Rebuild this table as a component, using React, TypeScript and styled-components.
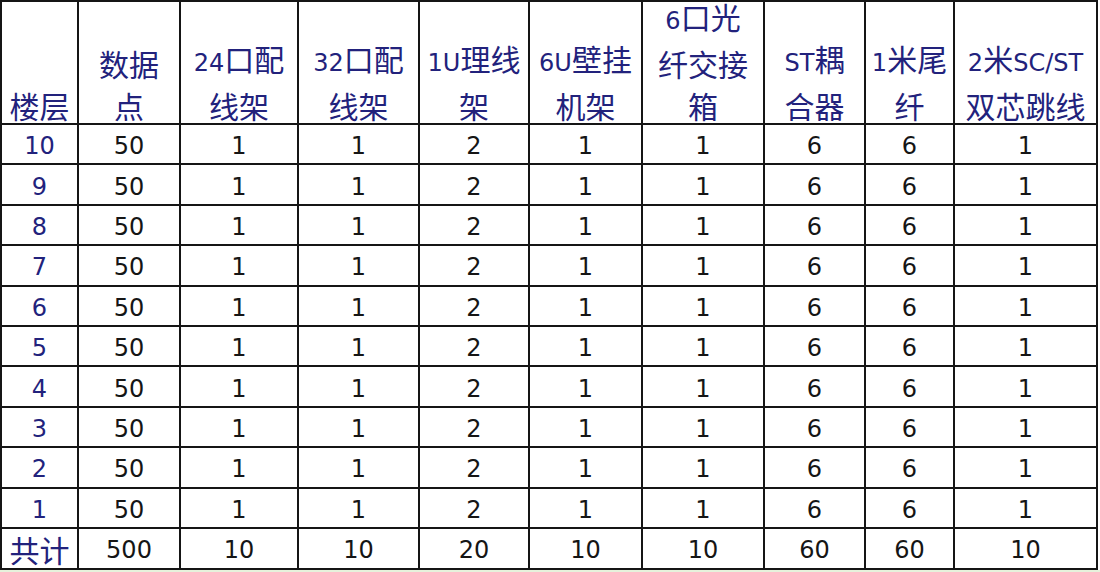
import React from "react";
import styled, { createGlobalStyle } from "styled-components";

const GlobalStyle = createGlobalStyle`
  html, body {
    margin: 0;
    padding: 0;
    background: #ffffff;
  }
  body {
    font-family: "DejaVu Sans", "Noto Sans CJK SC", sans-serif;
  }
`;

const INK = "#151515";
const NAVY = "#22227c";

const columns = [77, 102, 118, 121, 110, 113, 122, 101, 89, 143];

const headers: string[][] = [
  ["楼层"],
  ["数据", "点"],
  ["24口配", "线架"],
  ["32口配", "线架"],
  ["1U理线", "架"],
  ["6U壁挂", "机架"],
  ["6口光", "纤交接", "箱"],
  ["ST耦", "合器"],
  ["1米尾", "纤"],
  ["2米SC/ST", "双芯跳线"],
];

const perFloor = [50, 1, 1, 2, 1, 1, 6, 6, 1];
const totals = [500, 10, 10, 20, 10, 10, 60, 60, 10];
const floors = [10, 9, 8, 7, 6, 5, 4, 3, 2, 1];

const Page = styled.div`
  width: 1100px;
  height: 572px;
  overflow: hidden;
  display: flex;
  flex-direction: column;
  background: #ffffff;
`;

const Sheet = styled.table`
  width: 1097px;
  table-layout: fixed;
  border-collapse: collapse;
  border: 2px solid ${INK};
  background: #ffffff;
`;

const HeadRow = styled.tr`
  height: 122px;
`;

const BodyRow = styled.tr<{ $h: number }>`
  height: ${(p) => p.$h}px;
`;

const Cell = styled.td<{ $navy?: boolean }>`
  border: 2px solid ${INK};
  padding: 4px 0 0 0;
  text-align: center;
  vertical-align: middle;
  font-family: "DejaVu Sans", sans-serif;
  font-size: 24px;
  line-height: 30px;
  color: ${(p) => (p.$navy ? NAVY : INK)};
  overflow: hidden;
  white-space: nowrap;
`;

const HeadCell = styled.td`
  border: 2px solid ${INK};
  padding: 0;
  vertical-align: bottom;
`;

const HeadBox = styled.div`
  height: 121px;
  overflow: hidden;
  display: flex;
  flex-direction: column;
  justify-content: flex-end;
  align-items: center;
  font-family: "Noto Sans CJK SC", sans-serif;
  font-size: 30px;
  line-height: 42px;
  color: ${NAVY};
  white-space: nowrap;
`;

const HeadLines = styled.div`
  margin-bottom: -3px;
  text-align: center;
`;

const Latin = styled.span`
  font-family: "DejaVu Sans", sans-serif;
  font-size: 24px;
`;

const Han = styled.span`
  font-family: "Noto Sans CJK SC", sans-serif;
  font-size: 30px;
  line-height: 30px;
  position: relative;
  top: 1px;
`;

const Strip = styled.div`
  flex: 1;
  background: #e6f2dc;
`;

function Label({ text }: { text: string }) {
  const parts = text.split(/([A-Za-z0-9/]+)/).filter(Boolean);
  return (
    <>
      {parts.map((p, i) =>
        /^[A-Za-z0-9/]+$/.test(p) ? <Latin key={i}>{p}</Latin> : <span key={i}>{p}</span>
      )}
    </>
  );
}

export default function App() {
  return (
    <>
      <GlobalStyle />
      <Page>
        <Sheet>
          <colgroup>
            {columns.map((w, i) => (
              <col key={i} style={{ width: w }} />
            ))}
          </colgroup>
          <tbody>
            <HeadRow>
              {headers.map((lines, i) => (
                <HeadCell key={i}>
                  <HeadBox>
                    <HeadLines>
                      {lines.map((l, j) => (
                        <div key={j}>
                          <Label text={l} />
                        </div>
                      ))}
                    </HeadLines>
                  </HeadBox>
                </HeadCell>
              ))}
            </HeadRow>
            {floors.map((f) => (
              <BodyRow key={f} $h={40.4}>
                <Cell $navy>{f}</Cell>
                {perFloor.map((v, i) => (
                  <Cell key={i}>{v}</Cell>
                ))}
              </BodyRow>
            ))}
            <BodyRow $h={37}>
              <Cell $navy>
                <Han>共计</Han>
              </Cell>
              {totals.map((v, i) => (
                <Cell key={i}>{v}</Cell>
              ))}
            </BodyRow>
          </tbody>
        </Sheet>
        <Strip />
      </Page>
    </>
  );
}
